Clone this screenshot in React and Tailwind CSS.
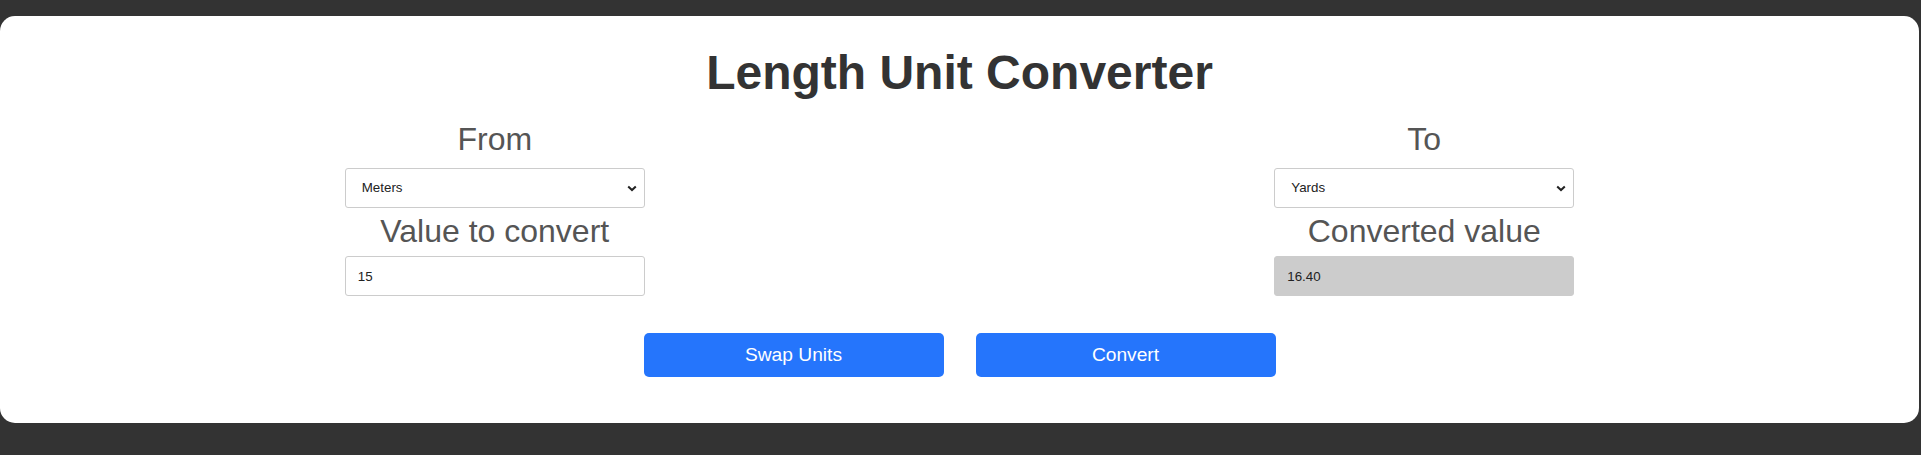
import { useState } from 'react';

const RATES = { Meters: 1, Kilometers: 1000, Centimeters: 0.01, Feet: 0.3048, Inches: 0.0254, Yards: 0.9144, Miles: 1609.344 };

function UnitSelect({ value, onChange }) {
  return (
    <div className="relative w-[300px] h-10 mt-[10px]">
      <select
        value={value}
        onChange={(e) => onChange(e.target.value)}
        className="appearance-none w-full h-full border border-[#cccccc] rounded-[3px] bg-white pl-[16px] text-[13.33px] text-[#222] outline-none"
      >
        {Object.keys(RATES).map((u) => (
          <option key={u} value={u}>{u}</option>
        ))}
      </select>
      <svg className="absolute right-[8px] top-[17px] pointer-events-none" width="10" height="7" viewBox="0 0 10 7">
        <path d="M1.2 1.4 L5 5 L8.8 1.4" fill="none" stroke="#222" strokeWidth="2" />
      </svg>
    </div>
  );
}

export default function App() {
  const [from, setFrom] = useState('Meters');
  const [to, setTo] = useState('Yards');
  const [value, setValue] = useState('15');
  const [result, setResult] = useState('16.40');

  const convert = () => {
    const n = parseFloat(value);
    if (isNaN(n)) return setResult('');
    setResult(((n * RATES[from]) / RATES[to]).toFixed(2));
  };

  const swap = () => {
    setFrom(to);
    setTo(from);
  };

  return (
    <div className="min-h-screen bg-[#333333] pt-4 font-['Liberation_Sans',Arial,sans-serif]">
      <div className="mr-[2px] bg-white rounded-[15px] px-[30px] pt-[29px] pb-[46px]">
        <h1 className="text-center text-[48px] leading-[55px] font-bold text-[#333333]">Length Unit Converter</h1>

        <div className="flex justify-around mt-[21px]">
          <div className="w-[300px] flex flex-col items-center">
            <label className="text-[32px] leading-[37px] text-[#555555]">From</label>
            <UnitSelect value={from} onChange={setFrom} />
            <label className="text-[32px] leading-[37px] text-[#555555] mt-[5px]">Value to convert</label>
            <input
              value={value}
              onChange={(e) => setValue(e.target.value)}
              className="mt-[6px] w-[300px] h-10 border border-[#cccccc] rounded-[3px] pl-[12px] text-[13.33px] text-[#222] outline-none"
            />
          </div>

          <div className="w-[300px] flex flex-col items-center">
            <label className="text-[32px] leading-[37px] text-[#555555]">To</label>
            <UnitSelect value={to} onChange={setTo} />
            <label className="text-[32px] leading-[37px] text-[#555555] mt-[5px]">Converted value</label>
            <input
              value={result}
              readOnly
              className="mt-[6px] w-[300px] h-10 border border-[#cccccc] bg-[#cccccc] rounded-[3px] pl-[12px] text-[13.33px] text-[#222] outline-none"
            />
          </div>
        </div>

        <div className="flex justify-center gap-8 mt-[37px]">
          <button onClick={swap} className="w-[300px] h-11 rounded-[5px] bg-[#2575fc] text-white text-[19.2px]">
            Swap Units
          </button>
          <button onClick={convert} className="w-[300px] h-11 rounded-[5px] bg-[#2575fc] text-white text-[19.2px]">
            Convert
          </button>
        </div>
      </div>
    </div>
  );
}
